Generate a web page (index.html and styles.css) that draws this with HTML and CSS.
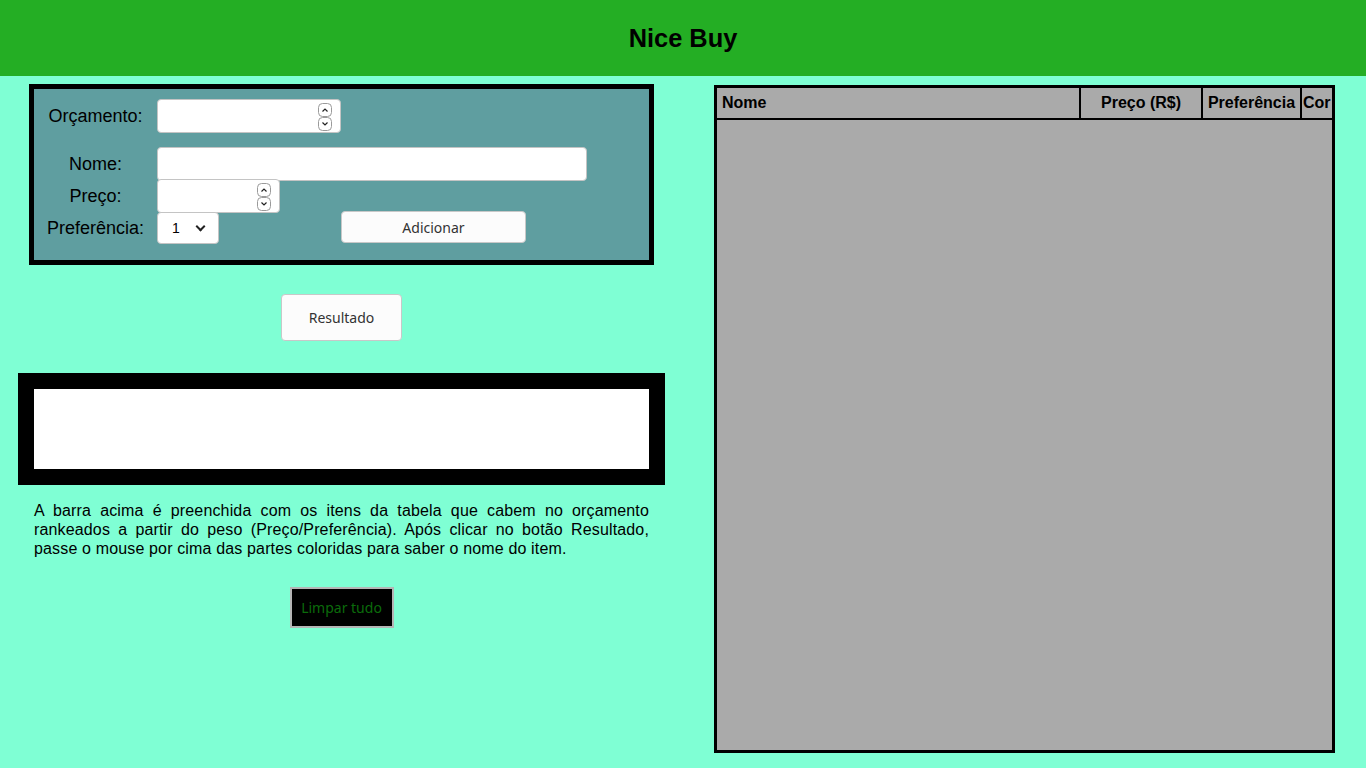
FILE: index.html
```html
<!DOCTYPE html>
<html lang="pt-BR">
<head>
    <meta charset="UTF-8">
    <meta name="viewport" content="width=device-width, initial-scale=1.0">
    <title>Nice Buy</title>
    <link rel="stylesheet" href="styles.css">
</head>
<body>
    <header class="topo">
        <h1>Nice Buy</h1>
    </header>

    <main class="conteudo">
        <section class="coluna-esq">
            <div class="form-box">
                <div class="linha">
                    <label class="rotulo" for="orcamento">Orçamento:</label>
                    <span class="campo-num campo-orcamento">
                        <input type="number" id="orcamento">
                        <svg class="spin" width="14" height="28" viewBox="0 0 14 28">
                            <rect x="0.5" y="0.5" width="13" height="13" rx="4" fill="#fff" stroke="#9a9a9a"/>
                            <rect x="0.5" y="14.5" width="13" height="13" rx="4" fill="#fff" stroke="#9a9a9a"/>
                            <path d="M4.5 8.5 L7 6 L9.5 8.5" fill="none" stroke="#222" stroke-width="1.2"/>
                            <path d="M4.5 19.5 L7 22 L9.5 19.5" fill="none" stroke="#222" stroke-width="1.2"/>
                        </svg>
                    </span>
                </div>
                <div class="linha linha-nome">
                    <label class="rotulo" for="nome">Nome:</label>
                    <input type="text" id="nome" class="campo-nome">
                </div>
                <div class="linha">
                    <label class="rotulo" for="preco">Preço:</label>
                    <span class="campo-num campo-preco">
                        <input type="number" id="preco">
                        <svg class="spin" width="14" height="28" viewBox="0 0 14 28">
                            <rect x="0.5" y="0.5" width="13" height="13" rx="4" fill="#fff" stroke="#9a9a9a"/>
                            <rect x="0.5" y="14.5" width="13" height="13" rx="4" fill="#fff" stroke="#9a9a9a"/>
                            <path d="M4.5 8.5 L7 6 L9.5 8.5" fill="none" stroke="#222" stroke-width="1.2"/>
                            <path d="M4.5 19.5 L7 22 L9.5 19.5" fill="none" stroke="#222" stroke-width="1.2"/>
                        </svg>
                    </span>
                </div>
                <div class="linha">
                    <label class="rotulo" for="preferencia">Preferência:</label>
                    <span class="select-wrap">
                        <select id="preferencia">
                            <option>1</option>
                            <option>2</option>
                            <option>3</option>
                            <option>4</option>
                            <option>5</option>
                        </select>
                    </span>
                    <button class="btn btn-adicionar">Adicionar</button>
                </div>
            </div>

            <button class="btn btn-resultado">Resultado</button>

            <div class="barra">
                <div class="barra-interna"></div>
            </div>

            <p class="explicacao">A barra acima é preenchida com os itens da tabela que cabem no orçamento rankeados a partir do peso (Preço/Preferência). Após clicar no botão Resultado, passe o mouse por cima das partes coloridas para saber o nome do item.</p>

            <button class="btn-limpar">Limpar tudo</button>
        </section>

        <section class="coluna-dir">
            <div class="tabela-box">
                <table class="tabela">
                    <colgroup>
                        <col class="c-nome">
                        <col class="c-preco">
                        <col class="c-pref">
                        <col class="c-cor">
                    </colgroup>
                    <thead>
                        <tr>
                            <th class="th-nome">Nome</th>
                            <th>Preço (R$)</th>
                            <th>Preferência</th>
                            <th class="th-cor">Cor</th>
                        </tr>
                    </thead>
                    <tbody id="itens">
                        <!-- itens adicionados aparecem aqui -->
                    </tbody>
                </table>
            </div>
        </section>
    </main>
</body>
</html>
```

FILE: styles.css
```css
body {
    margin: 0;
    background-color: #7fffd4; /* aquamarine */
    font-family: 'Liberation Sans', Arial, sans-serif;
    color: #000;
}
.topo {
    height: 76px;
    background-color: #24ae24;
    display: flex;
    align-items: center;
    justify-content: center;
}
.topo h1 {
    margin: 0;
    font-size: 25.4px;
    font-weight: bold;
}
.conteudo {
    display: grid;
    grid-template-columns: 683px 683px;
}
.coluna-esq {
    display: flex;
    flex-direction: column;
    align-items: center;
    padding-top: 8px;
}
.coluna-dir {
    display: flex;
    justify-content: center;
    padding-top: 9px;
}

/* formulario */
.form-box {
    box-sizing: border-box;
    width: 625px;
    border: 5px solid #000;
    background-color: #5f9ea0;
    padding: 11px 0 16px 0;
}
.linha {
    display: flex;
    align-items: center;
    height: 32px;
}
.linha-nome {
    margin-top: 16px;
}
.rotulo {
    width: 123px;
    text-align: center;
    font-size: 18px;
}
input {
    box-sizing: border-box;
    height: 34px;
    border: 1px solid #c4c4c4;
    border-radius: 4px;
    background: #fff;
    padding: 0 8px;
    font-size: 14px;
    outline: none;
}
.campo-nome {
    width: 430px;
}
.campo-num {
    position: relative;
    display: inline-block;
    height: 34px;
}
.campo-num input {
    width: 100%;
    -moz-appearance: textfield;
}
.campo-num input::-webkit-inner-spin-button,
.campo-num input::-webkit-outer-spin-button {
    -webkit-appearance: none;
    margin: 0;
}
.campo-orcamento {
    width: 184px;
}
.campo-preco {
    width: 123px;
}
.spin {
    position: absolute;
    right: 9px;
    top: 4px;
}
.select-wrap {
    position: relative;
    display: inline-block;
}
.select-wrap select {
    -webkit-appearance: none;
    appearance: none;
    box-sizing: border-box;
    width: 62px;
    height: 32px;
    border: 1px solid #c4c4c4;
    border-radius: 4px;
    background: #fff;
    padding: 0 0 0 14px;
    font-family: 'Liberation Sans', Arial, sans-serif;
    font-size: 14px;
    color: #000;
}
.select-wrap::after {
    content: '';
    position: absolute;
    right: 15px;
    top: 11px;
    width: 5px;
    height: 5px;
    border-right: 2px solid #222;
    border-bottom: 2px solid #222;
    transform: rotate(45deg);
    pointer-events: none;
}
.btn {
    box-sizing: border-box;
    background-color: #fcfcfc;
    border: 1px solid #c8c8c8;
    border-radius: 4px;
    color: #333;
    font-family: 'Noto Sans', 'DejaVu Sans', sans-serif;
    font-size: 14px;
    cursor: pointer;
}
.btn-adicionar {
    width: 185px;
    height: 32px;
    margin-left: 122px;
    margin-top: -2px;
}
.btn-resultado {
    width: 121px;
    height: 47px;
    margin-top: 29px;
}

/* barra de resultado */
.barra {
    box-sizing: border-box;
    width: 647px;
    border: 16px solid #000;
    margin-top: 32px;
}
.barra-interna {
    height: 80px;
    background-color: #fff;
}
.explicacao {
    width: 615px;
    margin: 16px 0 0 0;
    font-size: 16px;
    line-height: 19px;
    letter-spacing: 0.15px;
    text-align: justify;
}
.btn-limpar {
    box-sizing: border-box;
    width: 104px;
    height: 41px;
    margin-top: 29px;
    background-color: #000;
    color: #0b6b0b;
    border: 2px solid #b5b5b5;
    font-family: 'Noto Sans', 'DejaVu Sans', sans-serif;
    font-size: 14px;
    cursor: pointer;
}

/* tabela de itens */
.tabela-box {
    box-sizing: border-box;
    width: 621px;
    height: 668px;
    border: 3px solid #000;
    background-color: #aaaaaa;
    overflow: hidden;
}
.tabela {
    table-layout: fixed;
    border-collapse: separate;
    border-spacing: 0;
    width: 660px;
}
.c-nome { width: 364px; }
.c-preco { width: 122px; }
.c-pref { width: 99px; }
.c-cor { width: 75px; }
.tabela th {
    height: 30px;
    padding: 0 4px;
    border-right: 2px solid #000;
    border-bottom: 2px solid #000;
    font-size: 16px;
    font-weight: bold;
    text-align: center;
    white-space: nowrap;
    overflow: hidden;
}
.tabela .th-nome {
    text-align: left;
    padding-left: 5px;
}
.tabela .th-cor {
    text-align: left;
    padding-left: 1px;
}
```
